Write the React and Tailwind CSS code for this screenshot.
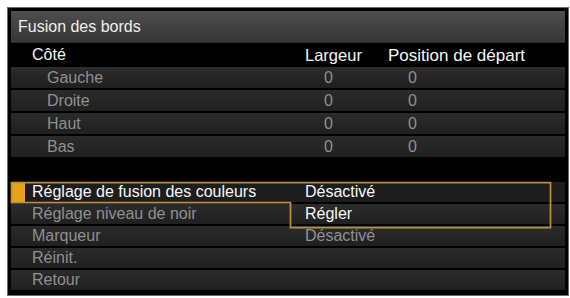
import React from 'react';

const sides = ['Gauche', 'Droite', 'Haut', 'Bas'];

const menu = [
  { label: 'Réglage de fusion des couleurs', value: 'Désactivé', selected: true },
  { label: 'Réglage niveau de noir', value: 'Régler', valueActive: true },
  { label: 'Marqueur', value: 'Désactivé' },
  { label: 'Réinit.', value: '' },
  { label: 'Retour', value: '' },
];

const App = () => {
  return (
    <div className="relative w-[570px] h-[298px] bg-white pt-[7px] pl-[7px] font-['Liberation_Sans',Arial,sans-serif] text-[16px] leading-none">
      <div className="w-[562px] h-[289px] border border-[#6b6b6b] bg-black p-[3px]">
        {/* title */}
        <div className="h-[32px] flex items-center pl-[7px] bg-linear-to-b from-[#4e4e4e] to-[#363636] border-b border-[#2a2a2a] text-[#efefef]">
          Fusion des bords
        </div>

        {/* column headers */}
        <div className="h-[24px] grid grid-cols-[294px_83px_1fr] items-center bg-black text-[#f5f5f5]">
          <div className="pl-[21px]">Côté</div>
          <div className="text-[16.5px]">Largeur</div>
          <div className="text-[17px]">Position de départ</div>
        </div>

        {/* side rows */}
        <div className="flex flex-col gap-[2px]">
          {sides.map((s) => (
            <div
              key={s}
              className="h-[21px] grid grid-cols-[294px_83px_1fr] items-center bg-linear-to-b from-[#2b2b2b] to-[#202020] text-[#909090]"
            >
              <div className="pl-[36px]">{s}</div>
              <div className="pl-[19px]">0</div>
              <div className="pl-[20px]">0</div>
            </div>
          ))}
        </div>

        {/* spacer */}
        <div className="h-[25px] bg-black" />

        {/* menu rows */}
        <div className="flex flex-col gap-[2px]">
          {menu.map((m) => (
            <div
              key={m.label}
              className={`h-[20px] grid grid-cols-[294px_1fr] items-center ${
                m.selected ? 'bg-[#1d1d1d]' : 'bg-linear-to-b from-[#2b2b2b] to-[#202020]'
              }`}
            >
              {m.selected ? (
                <div className="flex items-center h-full">
                  <div className="w-[14px] h-full bg-[#eba21a]" />
                  <span className="ml-[7px] text-[#f7f7f7]">{m.label}</span>
                </div>
              ) : (
                <div className="pl-[21px] text-[#909090]">{m.label}</div>
              )}
              <div className={m.selected || m.valueActive ? 'text-[#f7f7f7]' : 'text-[#909090]'}>
                {m.value}
              </div>
            </div>
          ))}
        </div>
      </div>

      {/* selection outline overlay */}
      <svg className="absolute left-0 top-0 pointer-events-none" width="570" height="298">
        <path
          d="M11.5 182.5 H550.5 V227.5 H290.5 V202.5 H11.5 Z"
          fill="none"
          stroke="#b8913f"
          strokeWidth="1.75"
        />
      </svg>
    </div>
  );
};

export default App;
